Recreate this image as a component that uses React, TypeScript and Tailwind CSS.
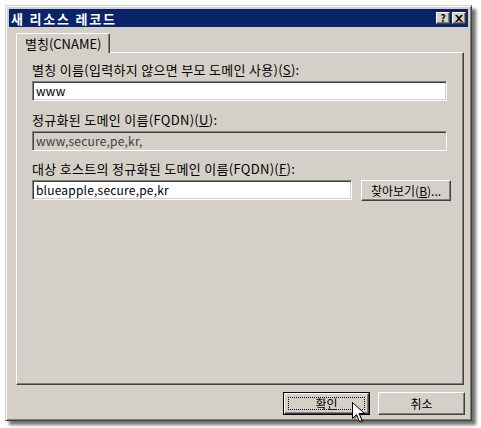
import React from 'react';

const font = { fontFamily: '"Noto Sans CJK KR", "Noto Sans", sans-serif' };

const raised =
  'border border-t-white border-l-white border-r-[#404040] border-b-[#404040] shadow-[inset_-1px_-1px_0_#808080]';
const sunken =
  'border border-t-[#808080] border-l-[#808080] border-r-white border-b-white shadow-[inset_1px_1px_0_#404040,inset_-1px_-1px_0_#d4d0c8]';

const Field: React.FC<{ value: string; disabled?: boolean; className?: string }> = ({ value, disabled, className }) => (
  <div
    className={`h-[20px] ${sunken} ${disabled ? 'bg-[#d4d0c8] text-[#404040]' : 'bg-white text-black'} px-[3px] flex items-center text-[12px] leading-none tracking-[0.2px] ${className ?? ''}`}
  >
    {value}
  </div>
);

const App: React.FC = () => {
  return (
    <div className="w-[481px] h-[428px] bg-white relative overflow-hidden text-black" style={font}>
      <div className="pt-[5px] pl-[5px]">
        <div className="w-[467px] h-[416px] bg-[#d4d0c8] border border-t-[#d4d0c8] border-l-[#d4d0c8] border-r-[#404040] border-b-[#404040] p-[3px] shadow-[inset_1px_1px_0_#fff,inset_-1px_-1px_0_#808080,4px_4px_3px_rgba(0,0,0,0.55)] flex flex-col">
          {/* title bar */}
          <div className="h-[18px] bg-[#0a246a] flex items-center pl-[2px] pr-[2px]">
            <span className="text-white font-bold text-[13px] leading-none tracking-[1.8px]">새 리소스 레코드</span>
            <div className="ml-auto flex gap-[2px]">
              <div className={`w-[14px] h-[12px] bg-[#d4d0c8] ${raised} flex items-center justify-center text-[10px] font-bold leading-none`}>?</div>
              <div className={`w-[14px] h-[12px] bg-[#d4d0c8] ${raised} flex items-center justify-center`}>
                <svg width="8" height="7" viewBox="0 0 8 7">
                  <path d="M0 0h2l2 2 2-2h2L5 3.5 8 7H6L4 5 2 7H0l3-3.5z" fill="#000" />
                </svg>
              </div>
            </div>
          </div>

          {/* tab strip */}
          <div className="pl-[7px] pt-[6px] flex">
            <div className="relative z-10 h-[20px] w-[94px] rounded-t-[2px] border border-b-0 border-t-white border-l-white border-r-[#404040] shadow-[inset_-1px_0_0_#808080] bg-[#d4d0c8] flex items-center pl-[8px] text-[13px] leading-none">
              별칭(CNAME)
            </div>
          </div>

          {/* tab panel */}
          <div className="-mt-[1px] ml-[7px] w-[448px] h-[333px] border border-t-white border-l-white border-r-[#404040] border-b-[#404040] shadow-[inset_-1px_-1px_0_#808080] pl-[15px] pt-[10px] text-[13px] leading-[14px] tracking-[0.3px]">
            <div>
              별칭 이름(입력하지 않으면 부모 도메인 사용)(<span className="underline">S</span>):
            </div>
            <Field value="www" className="mt-[4px] w-[415px]" />
            <div className="mt-[12px]">
              정규화된 도메인 이름(FQDN)(<span className="underline">U</span>):
            </div>
            <Field value="www,secure,pe,kr," disabled className="mt-[4px] w-[415px]" />
            <div className="mt-[11px]">
              대상 호스트의 정규화된 도메인 이름(FQDN)(<span className="underline">F</span>):
            </div>
            <div className="mt-[4px] flex gap-[9px]">
              <Field value="blueapple,secure,pe,kr" className="w-[320px]" />
              <button className={`w-[90px] h-[21px] bg-[#d4d0c8] ${raised} text-[12px] leading-none tracking-normal`}>
                찾아보기(<span className="underline">B</span>)...
              </button>
            </div>
          </div>

          {/* buttons */}
          <div className="mt-[7px] flex justify-end gap-[8px] pr-[3px]">
            <button className="w-[87px] h-[23px] bg-[#d4d0c8] border border-black p-0">
              <div className={`w-full h-full ${raised} p-[3px]`}>
                <div className="w-full h-full border border-dotted border-black flex items-center justify-center text-[12px] leading-none">
                  확인
                </div>
              </div>
            </button>
            <button className={`w-[87px] h-[23px] bg-[#d4d0c8] ${raised} text-[12px] leading-none`}>취소</button>
          </div>
        </div>
      </div>

      {/* mouse cursor */}
      <svg className="absolute left-[351px] top-[401px]" width="14" height="22" viewBox="0 0 14 22">
        <path d="M1.5 1.5v16l4-4 3 7 2.5-1-3-7h5.5z" fill="rgba(0,0,0,0.35)" transform="translate(1.5 1.5)" />
        <path d="M1.5 1.5v16l4-4 3 7 2.5-1-3-7h5.5z" fill="#fff" stroke="#000" strokeWidth="1" strokeLinejoin="miter" />
      </svg>
    </div>
  );
};

export default App;
